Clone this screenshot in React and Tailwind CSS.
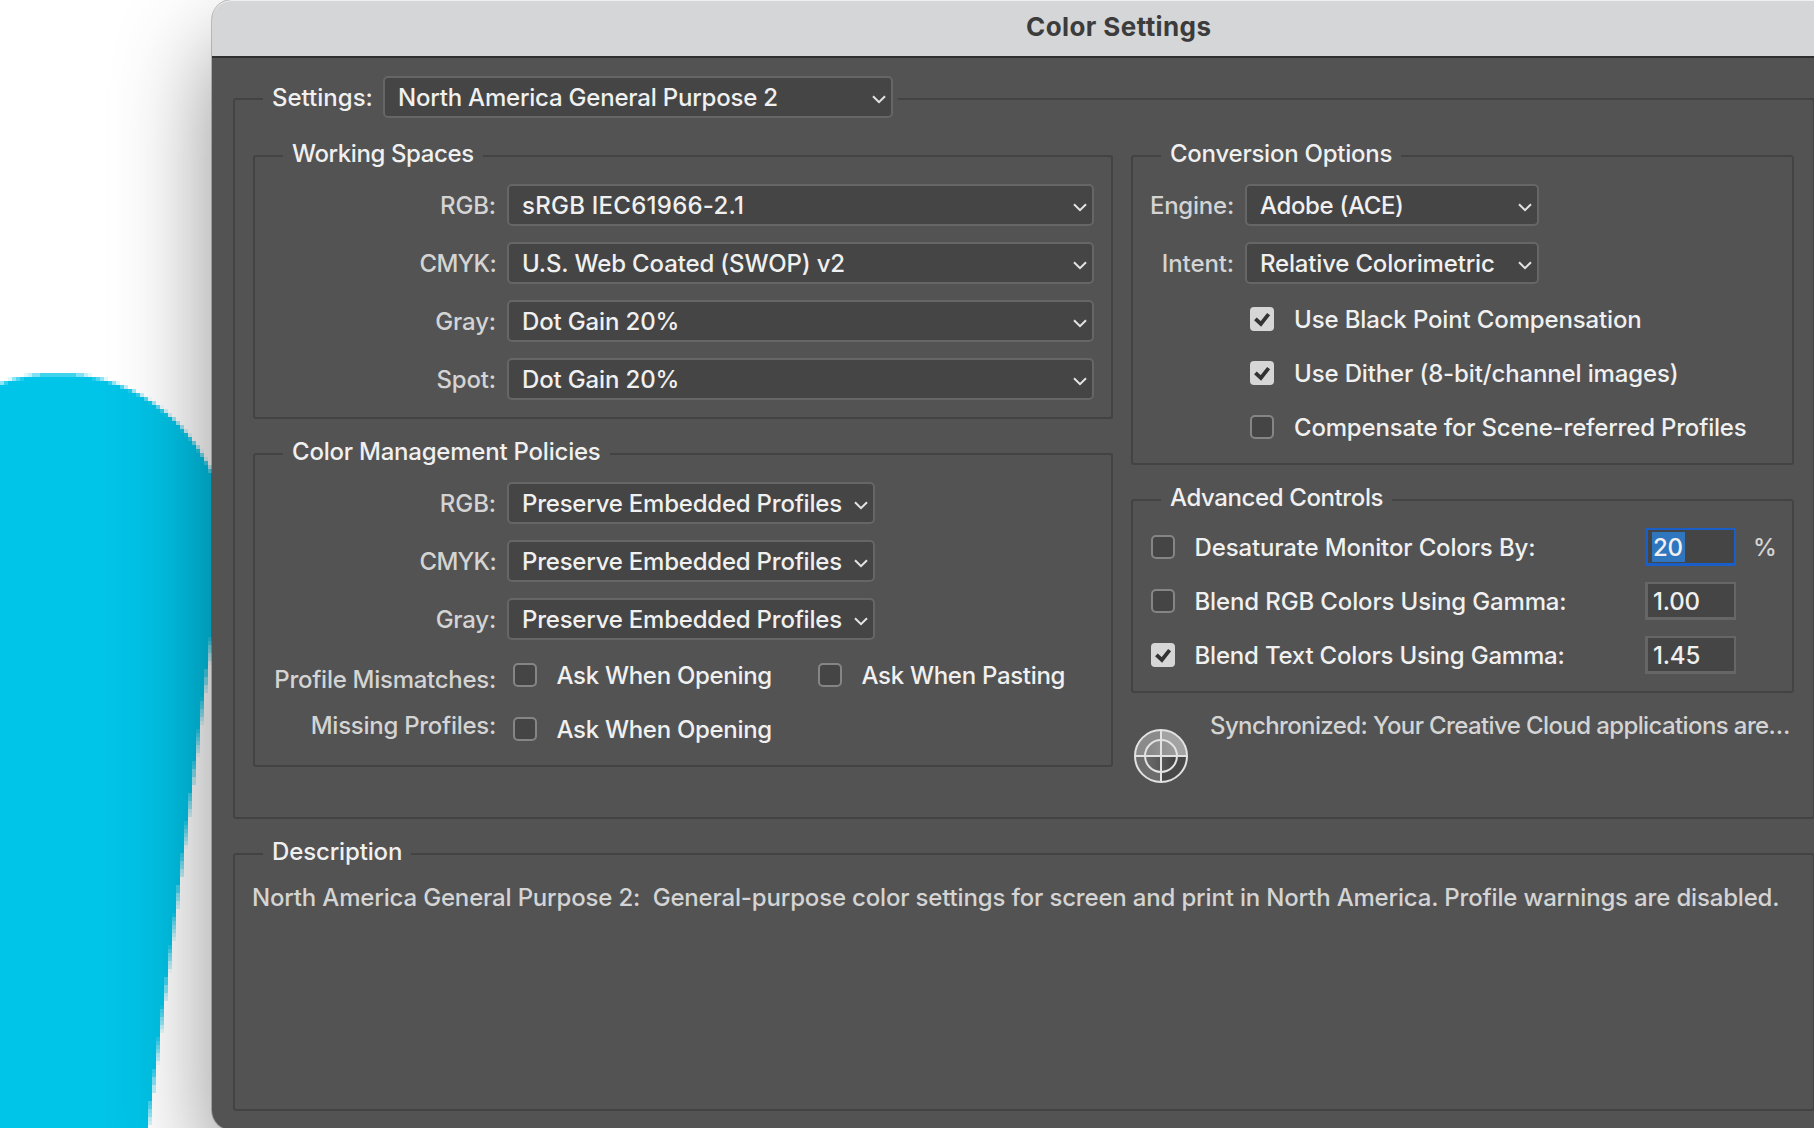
import React, { useState } from "react";

const CELL = 4;

// horizontal extent of the cyan stroke at a given y
function strokeEdges(y) {
  const cx = 58;
  const cy = 542;
  const r = 168.5;
  if (y < cy - r) return null;
  let left = 0;
  let right = 300;
  if (y < cy) {
    const half = Math.sqrt(r * r - (y - cy) * (y - cy));
    left = cx - half;
    right = cx + half;
  }
  if (y > 560) right = Math.min(right, 220.4 - (y - 570) / 7.7);
  return [left, right];
}

// the artwork is zoomed in, so its edge is drawn as 4px canvas pixels
function canvasCells() {
  const cells = [];
  for (let y = 373; y < 1128; y += CELL) {
    let run = null;
    for (let x = 0; x < 216; x += CELL) {
      let hits = 0;
      for (let i = 0; i < 4; i++) {
        const edges = strokeEdges(y + i + 0.5);
        if (!edges) continue;
        for (let j = 0; j < 4; j++) {
          const px = x + j + 0.5;
          if (px >= edges[0] && px <= edges[1]) hits++;
        }
      }
      if (hits === 16) {
        if (run) run.w += CELL;
        else {
          run = { x, y, w: CELL, o: 1 };
          cells.push(run);
        }
      } else {
        run = null;
        if (hits > 0) cells.push({ x, y, w: CELL, o: hits / 16 });
      }
    }
  }
  return cells;
}

const CELLS = canvasCells();

function Artwork() {
  return (
    <svg className="absolute left-0 top-0" width="216" height="1128" shapeRendering="crispEdges">
      {CELLS.map((c) => (
        <rect key={`${c.x}-${c.y}`} x={c.x} y={c.y} width={c.w} height={CELL} fill="#00c4e8" fillOpacity={c.o} />
      ))}
    </svg>
  );
}

function Group({ title, className, children }) {
  return (
    <fieldset className={`min-w-0 rounded-[3px] border-2 border-[#434343] ${className}`}>
      <legend className="ml-7 h-7 whitespace-pre pl-[9px] pr-[9px] leading-6">{title}</legend>
      {children}
    </fieldset>
  );
}

function Select({ value, className }) {
  return (
    <button
      type="button"
      className={`flex h-[42px] shrink-0 items-center justify-between rounded-[5px] border-2 border-[#666666] bg-[#454545] pl-[13px] pr-[5px] ${className}`}
    >
      <span className="whitespace-nowrap pt-0.5">{value}</span>
      <svg className="mt-1" width="14" height="9" viewBox="0 0 14 9" fill="none">
        <path d="M1 1.2 L7 7.2 L13 1.2" stroke="#e4e4e4" strokeWidth="2" />
      </svg>
    </button>
  );
}

function SelectRow({ label, value, labelClass, selectClass }) {
  return (
    <div className="flex items-center">
      <span className={`mr-[11px] shrink-0 whitespace-nowrap pt-0.5 text-right text-[#d4d4d4] ${labelClass}`}>{label}</span>
      <Select value={value} className={selectClass} />
    </div>
  );
}

function Checkbox({ label, defaultChecked = false }) {
  const [checked, setChecked] = useState(defaultChecked);
  return (
    <button type="button" className="flex h-6 items-center gap-5" onClick={() => setChecked(!checked)}>
      {checked ? (
        <span className="flex size-6 shrink-0 items-center justify-center rounded-[4px] bg-[#d6d6d6]">
          <svg width="24" height="24" viewBox="0 0 24 24" fill="none">
            <path d="M5.4 11.8 L10.9 17 L18.6 7.2" stroke="#323232" strokeWidth="3.8" />
          </svg>
        </span>
      ) : (
        <span className="size-6 shrink-0 rounded-[5px] border-2 border-[#858585] bg-[#454545]" />
      )}
      <span className="whitespace-nowrap pt-0.5">{label}</span>
    </button>
  );
}

function ValueField({ value, focused }) {
  return (
    <div
      className={`flex h-[38px] items-center border-2 border-b-[3px] border-l-[3px] bg-[#454545] pl-1 ${
        focused ? "border-[#1a5fc8]" : "border-[#666666]"
      }`}
    >
      <span className={`h-[30px] pl-px pr-0.5 leading-[31px] tracking-[-0.2px] ${focused ? "bg-[#3076be]" : ""}`}>{value}</span>
    </div>
  );
}

function SyncIcon() {
  return (
    <svg className="ml-[3px] mt-4 shrink-0" width="54" height="54" viewBox="0 0 54 54" fill="none">
      <defs>
        <linearGradient id="innerLower" x1="0" y1="0" x2="1" y2="0">
          <stop offset="0" stopColor="#6c6c6c" />
          <stop offset="0.5" stopColor="#585858" />
          <stop offset="1" stopColor="#404040" />
        </linearGradient>
        <linearGradient id="innerUpper" x1="0" y1="0" x2="1" y2="0">
          <stop offset="0" stopColor="#868686" />
          <stop offset="1" stopColor="#9c9c9c" />
        </linearGradient>
      </defs>
      <path d="M27 27 H1 A26 26 0 0 1 27 1 Z" fill="#8a8a8a" />
      <path d="M27 27 V1 A26 26 0 0 1 53 27 Z" fill="#a3a3a3" />
      <path d="M27 27 H53 A26 26 0 0 1 27 53 Z" fill="#484848" />
      <path d="M27 27 V53 A26 26 0 0 1 1 27 Z" fill="#6c6c6c" />
      <path d="M11 27 A16 16 0 0 1 43 27 Z" fill="url(#innerUpper)" />
      <path d="M11 27 A16 16 0 0 0 43 27 Z" fill="url(#innerLower)" />
      <path d="M27 1 V53 M1 27 H53" stroke="#e2e2e2" strokeWidth="2" />
      <circle cx="27" cy="27" r="16" stroke="#e2e2e2" strokeWidth="2" />
      <circle cx="27" cy="27" r="26" stroke="#e2e2e2" strokeWidth="2" />
    </svg>
  );
}

function WorkingSpaces() {
  return (
    <Group title={<span className="tracking-[-0.4px]">Working Spaces</span>} className="h-[277px]">
      <div className="flex flex-col gap-4 pt-[14px]">
        <SelectRow label="RGB:" value={<span className="tracking-[0.25px]">sRGB IEC61966-2.1</span>} labelClass="w-[241px]" selectClass="w-[587px]" />
        <SelectRow label="CMYK:" value="U.S. Web Coated (SWOP) v2" labelClass="w-[241px] tracking-[-0.7px]" selectClass="w-[587px]" />
        <SelectRow label="Gray:" value="Dot Gain 20%" labelClass="w-[241px]" selectClass="w-[587px]" />
        <SelectRow label="Spot:" value="Dot Gain 20%" labelClass="w-[241px]" selectClass="w-[587px]" />
      </div>
    </Group>
  );
}

function ManagementPolicies() {
  return (
    <Group title="Color Management Policies" className="mt-[21px] h-[327px] tracking-[-0.22px]">
      <div className="flex flex-col gap-4 pt-[14px]">
        <SelectRow label="RGB:" value="Preserve Embedded Profiles" labelClass="w-[241px] tracking-[-0.1px]" selectClass="w-[368px]" />
        <SelectRow label="CMYK:" value="Preserve Embedded Profiles" labelClass="w-[241px] tracking-[-0.7px]" selectClass="w-[368px]" />
        <SelectRow label="Gray:" value="Preserve Embedded Profiles" labelClass="w-[241px]" selectClass="w-[368px]" />
      </div>
      <div className="flex">
        <div className="flex w-[241px] flex-col gap-[22px] pt-7 text-right leading-6 tracking-[-0.27px] text-[#d4d4d4]">
          <span>Profile Mismatches:</span>
          <span>Missing Profiles:</span>
        </div>
        <div className="grid grid-cols-[305px_auto] gap-y-[30px] pl-[16.5px] pt-[23px] tracking-[-0.3px]">
          <Checkbox label="Ask When Opening" />
          <Checkbox label="Ask When Pasting" />
          <Checkbox label="Ask When Opening" />
        </div>
      </div>
    </Group>
  );
}

function ConversionOptions() {
  return (
    <Group title={<span className="tracking-[-0.24px]">Conversion Options</span>} className="h-[323px]">
      <div className="flex flex-col gap-4 pt-[14px]">
        <SelectRow label="Engine:" value={<span className="tracking-[-0.35px]">Adobe (ACE)</span>} labelClass="w-[101px] tracking-[-0.22px]" selectClass="w-[294px]" />
        <SelectRow label="Intent:" value={<span className="tracking-[-0.18px]">Relative Colorimetric</span>} labelClass="w-[101px] tracking-[-0.1px]" selectClass="w-[294px]" />
      </div>
      <div className="flex flex-col gap-[30px] pl-[117px] pt-[23px]">
        <Checkbox label="Use Black Point Compensation" defaultChecked />
        <Checkbox label="Use Dither (8-bit/channel images)" defaultChecked />
        <Checkbox label={<span className="tracking-[-0.19px]">Compensate for Scene-referred Profiles</span>} />
      </div>
    </Group>
  );
}

function AdvancedControls() {
  return (
    <Group title={<span className="tracking-[-0.39px]">Advanced Controls</span>} className="mt-[21px] h-[207px]">
      <div className="grid grid-cols-[494.5px_91px_auto] items-center gap-y-4 pl-[17.5px] pt-[14px]">
        <Checkbox label="Desaturate Monitor Colors By:" />
        <ValueField value="20" focused />
        <span className="pl-[17px] pt-0.5 text-[#d4d4d4]">%</span>
        <Checkbox label="Blend RGB Colors Using Gamma:" />
        <ValueField value="1.00" />
        <span />
        <Checkbox label={<span className="tracking-[-0.2px]">Blend Text Colors Using Gamma:</span>} defaultChecked />
        <ValueField value="1.45" />
      </div>
    </Group>
  );
}

export default function App() {
  return (
    <div className="relative h-[1128px] w-[1814px] overflow-hidden bg-white pl-[212px] font-['Inter',sans-serif] text-[24px] font-medium leading-6 text-[#f0f0f0]">
      <Artwork />
      <div className="relative flex h-[1130px] w-[1792px] flex-col rounded-[20px] bg-[#535353] tracking-[-0.14px] shadow-[0_0_0_1px_rgba(0,0,0,0.22),0_46px_96px_rgba(0,0,0,0.44)]">
        <div className="flex h-[58px] items-center rounded-t-[20px] border-b-2 border-[#2f2f2f] bg-[#d5d6d8] shadow-[inset_0_1px_0_#efefef]">
          <h1 className="pb-0.5 pl-[814px] text-[26px] font-bold tracking-[0.4px] text-[#3c3c3c]">Color Settings</h1>
        </div>

        <div className="flex flex-col gap-[21px] pl-[21px] pt-[18px]">
          <fieldset className="h-[743px] w-[1582px] min-w-0 rounded-[3px] border-2 border-[#434343]">
            <legend className="ml-7 h-[46px] pl-[9px] pr-[5px]">
              <div className="flex items-center">
                <span className="w-[111px] pt-0.5 tracking-normal">Settings:</span>
                <Select value={<span className="tracking-[-0.21px]">North America General Purpose 2</span>} className="w-[510px]" />
              </div>
            </legend>
            <div className="flex gap-[18px] pl-[18px] pt-5">
              <div className="w-[860px]">
                <WorkingSpaces />
                <ManagementPolicies />
              </div>
              <div className="w-[663px]">
                <ConversionOptions />
                <AdvancedControls />
                <div className="flex pt-5">
                  <SyncIcon />
                  <span className="ml-[22px] mt-px whitespace-nowrap tracking-[-0.61px] text-[#d4d4d4]">
                    Synchronized: Your Creative Cloud applications are…
                  </span>
                </div>
              </div>
            </div>
          </fieldset>

          <Group title="Description" className="h-[271px] w-[1582px]">
            <p className="whitespace-pre pl-[17px] pt-[18px] tracking-[-0.17px] text-[#d4d4d4]">
              {"North America General Purpose 2:  General-purpose color settings for screen and print in North America. Profile warnings are disabled."}
            </p>
          </Group>
        </div>
      </div>
    </div>
  );
}
